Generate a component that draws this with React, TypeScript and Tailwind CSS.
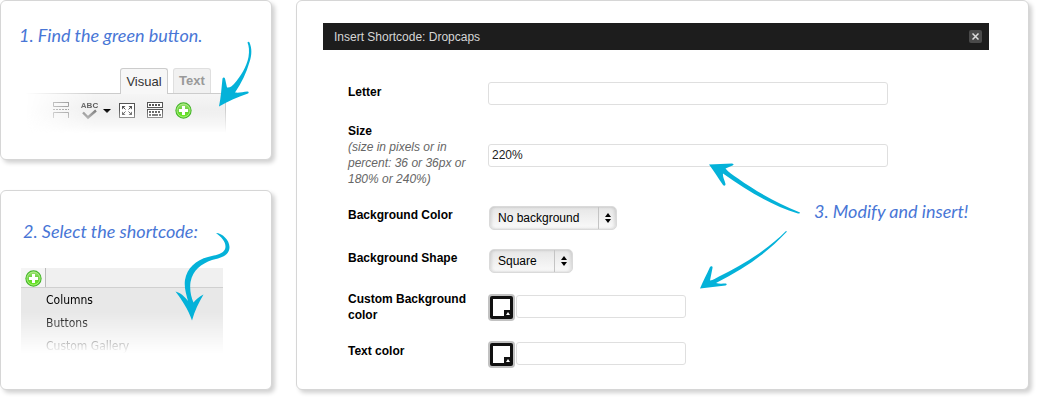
import type { ReactNode } from "react";

const MENU_ITEMS = ["Columns", "Buttons", "Custom Gallery"];

const CARD =
  "relative bg-white border border-[#d6d6d6] rounded-md shadow-[3px_3px_4px_rgba(0,0,0,0.18)]";
const NOTE =
  "font-['Lato','Open_Sans',sans-serif] italic text-lg leading-6 text-[#4876d6] whitespace-nowrap";
const FIELD =
  "block h-[23px] border border-[#dfdfdf] rounded-[3px] bg-white px-[3px] text-xs text-[#222] outline-none";

function PlusIcon({ id }: { id: string }) {
  return (
    <svg width="17" height="17" viewBox="0 0 17 17" aria-hidden="true">
      <defs>
        <linearGradient id={id} x1="0" y1="0" x2="0" y2="1">
          <stop offset="0" stopColor="#a4e47c" />
          <stop offset="0.5" stopColor="#62cf34" />
          <stop offset="1" stopColor="#6cf01c" />
        </linearGradient>
      </defs>
      <circle cx="8.5" cy="8.5" r="7.6" fill={`url(#${id})`} stroke="#45b52c" strokeWidth="1.1" />
      <circle cx="8.5" cy="8.5" r="6.5" fill="none" stroke="#b4f08c" strokeWidth="0.8" />
      <path d="M8.5 3.9v9.2M3.9 8.5h9.2" stroke="#fff" strokeWidth="3" />
    </svg>
  );
}

function MoreIcon() {
  return (
    <svg width="16" height="16" viewBox="0 0 16 16" fill="none" stroke="#666" aria-hidden="true">
      <path d="M0.5 0v4.5h15V0M0 0.5h16" />
      <path d="M0 7.5h16" strokeDasharray="2 1" />
      <path d="M0.5 16v-5.5h15V16" />
    </svg>
  );
}

function SpellIcon() {
  return (
    <svg width="18" height="18" viewBox="0 0 18 18" aria-hidden="true">
      <text x="8.5" y="6" textAnchor="middle" fontSize="8" fontWeight="bold" fontFamily="Liberation Sans" fill="#555">
        ABC
      </text>
      <path d="M2 10.5l5 5 8-7" fill="none" stroke="#777" strokeWidth="2.4" />
    </svg>
  );
}

function FullscreenIcon() {
  return (
    <svg width="16" height="15" viewBox="0 0 16 15" fill="none" aria-hidden="true">
      <rect x="0.5" y="0.5" width="15" height="14" fill="#fff" stroke="#555" />
      <path d="M3 3h3.500L3 6.500zM13 3v3.500L9.500 3zM13 12H9.500L13 8.500zM3 12V8.500L6.500 12z" fill="#555" />
      <path d="M4 4l2.500 2.500M12 4L9.500 6.500M12 11L9.500 8.500M4 11l2.500-2.500" stroke="#555" />
    </svg>
  );
}

function KeyboardIcon() {
  return (
    <svg width="16" height="16" viewBox="0 0 16 16" fill="none" stroke="#555" aria-hidden="true">
      <rect x="0.5" y="0.5" width="15" height="5" fill="#fff" />
      <rect x="0.5" y="7.5" width="15" height="8" fill="#fff" />
      <path d="M2 3h12" strokeWidth="2" strokeDasharray="2 1" />
      <path d="M2 10h12" strokeWidth="2" strokeDasharray="2 1" />
      <path d="M2 13h2M5 13h6M12 13h2" strokeWidth="2" />
    </svg>
  );
}

function Row({ label, id, hint, centered, children }: {
  label: string;
  id: string;
  hint?: string;
  centered?: boolean;
  children: ReactNode;
}) {
  return (
    <div className={`grid grid-cols-[140px_1fr] ${centered ? "items-center" : "items-start"}`}>
      <label htmlFor={id} className={`block pr-4 leading-4 ${centered ? "" : "pt-0.5"}`}>
        <span className="font-bold text-black">{label}</span>
        {hint && <em className="block text-[#666]">{hint}</em>}
      </label>
      {children}
    </div>
  );
}

function Dropdown({ id, options, width }: { id: string; options: string[]; width: string }) {
  return (
    <div className={`relative ml-px mt-px h-6 ${width}`}>
      <select
        id={id}
        className="h-6 w-full appearance-none rounded-[5px] border border-[#dadada] bg-linear-to-b from-[#e6e6e6] to-[#fafafa] pl-2 text-xs text-black shadow-[inset_2px_0_3px_rgba(0,0,0,0.1),inset_-2px_0_3px_rgba(0,0,0,0.1)] outline-none"
      >
        {options.map((option) => (
          <option key={option}>{option}</option>
        ))}
      </select>
      <span className="pointer-events-none absolute inset-y-px right-px flex w-[18px] items-center justify-center border-l border-[#c4c4c4]">
        <svg width="6" height="10" viewBox="0 0 6 10" aria-hidden="true">
          <path d="M3 0l3 4H0zM3 10l3-4H0z" fill="#000" />
        </svg>
      </span>
    </div>
  );
}

function ColorField({ id, label }: { id: string; label: string }) {
  return (
    <div className="flex items-start gap-px">
      <button type="button" aria-label={label} className="shrink-0">
        <svg width="27" height="27" viewBox="0 0 27 27">
          <rect width="27" height="27" rx="4" fill="#c2c2c2" />
          <rect x="2" y="2" width="23" height="23" rx="2" fill="#111" />
          <path d="M5 5h17v11h-6v6H5z" fill="#fff" />
          <path d="M20 18l2 3h-4z" fill="#fff" />
        </svg>
      </button>
      <input id={id} type="text" className={`${FIELD} mt-px w-[170px]`} />
    </div>
  );
}

export default function App() {
  return (
    <div className="flex items-stretch gap-6 bg-white pb-[11px] pr-2.5 font-['Liberation_Sans',Arial,sans-serif] text-xs">
      <div className="flex w-[272px] shrink-0 flex-col gap-[30px]">
        {/* Step 1 */}
        <section className={`${CARD} pt-[22px] pb-[26px]`}>
          <h2 className={`${NOTE} pl-[18px]`}>1. Find the green button.</h2>
          <div className="ml-6 mr-[45px] mt-[21px]">
            <div className="flex justify-end gap-[5px] pr-[15px] text-[13px]">
              <button
                type="button"
                className="relative z-10 -mb-px h-[26px] w-12 rounded-t-[3px] border border-b-0 border-[#ccc] bg-[#f7f7f7] text-[#333]"
              >
                Visual
              </button>
              <button
                type="button"
                className="h-[25px] w-[38px] rounded-t-[3px] border border-b-0 border-[#dfdfdf] bg-[#f1f1f1] font-bold text-[#999]"
              >
                Text
              </button>
            </div>
            <div className="mask-[linear-gradient(to_bottom,#000_40%,transparent)]">
              <div className="flex h-10 items-start border-t border-r border-[#ccc] bg-linear-to-b from-[#f5f5f5] to-[#e6e6e6] pl-7 pt-2 mask-[linear-gradient(to_right,transparent,#000_35%)]">
                <button type="button" aria-label="Insert More tag" className="mr-3">
                  <MoreIcon />
                </button>
                <button type="button" aria-label="Spellcheck" className="flex items-center gap-1">
                  <SpellIcon />
                  <svg width="8" height="4" viewBox="0 0 8 4" aria-hidden="true">
                    <path d="M0 0h8L4 4z" fill="#000" />
                  </svg>
                </button>
                <button type="button" aria-label="Fullscreen" className="ml-2 mr-3 pt-px">
                  <FullscreenIcon />
                </button>
                <button type="button" aria-label="Kitchen sink" className="mr-3">
                  <KeyboardIcon />
                </button>
              </div>
            </div>
          </div>
          {/* the green button stays at full strength over the faded toolbar */}
          <button type="button" aria-label="Add shortcode" className="absolute left-[174px] top-[101px]">
            <PlusIcon id="plus-toolbar" />
          </button>
          <svg
            className="pointer-events-none absolute left-[209px] top-[39px]"
            width="50"
            height="70"
            viewBox="210 40 50 70"
            aria-hidden="true"
          >
            <path
              d="M247.500 42.500C248 41.500 249 41.500 249.500 42.500C252 48 252 55 249.500 62C246.500 73 241.500 83 235 92.500C239 93 243 92 247.500 91.500C249 91.800 249 93 248 93.500C238 97 228 101 219 106.500C221 97 221.500 87 222.500 78.500C223 77 224.500 77 225 78.500L227 87.500C230 88 232 86 234 84C241 76 246.500 67 248.500 57C249.500 51 249 46 247.500 42.500Z"
              fill="#04b2d9"
            />
          </svg>
        </section>

        {/* Step 2 */}
        <section className={`${CARD} pt-7 pb-8`}>
          <h2 className={`${NOTE} pl-[22px]`}>2. Select the shortcode:</h2>
          <div className="ml-5 mr-12 mt-[25px] mask-[linear-gradient(to_bottom,#000_50%,transparent_96%)]">
            <div className="flex h-5 border-b border-[#d0d0d0] bg-[#f0f0f0]">
              <button
                type="button"
                aria-label="Shortcodes"
                className="flex w-[25px] items-center justify-center border-r border-[#bbb] bg-[#f5f5f5] pt-0.5"
              >
                <PlusIcon id="plus-menu" />
              </button>
            </div>
            <ul className="bg-[#e8e8e8] font-['DejaVu_Sans_Condensed','Noto_Sans',Tahoma,sans-serif] text-xs text-black">
              {MENU_ITEMS.map((item) => (
                <li key={item} className="h-[23px] pl-[25px] leading-[25px]">
                  {item}
                </li>
              ))}
            </ul>
          </div>
          <svg
            className="pointer-events-none absolute left-[169px] top-[39px]"
            width="65"
            height="95"
            viewBox="170 230 65 95"
            aria-hidden="true"
          >
            <path
              d="M216 233C222 233 229.500 240 229.500 247C229.500 256 220 258 212 260C201 264 193 270 190.500 282C189.500 290 191 297 193.500 302.500C196 299 199 297 203.500 294.500C199 302 194.500 311 192 320.500C188 309 182 300 175.500 291.500C181 293 185 297 188 301C186 294 184 287 185 280C187 268 196 260 208 257C216 255 225 254 225.500 247C225.500 241 221 237 216 233Z"
              fill="#04b2d9"
            />
          </svg>
        </section>
      </div>

      {/* Step 3 */}
      <section className={`${CARD} min-w-0 flex-1 pt-[22px] pb-[19px]`}>
        <header className="ml-[26px] mr-[39px] flex h-[27px] items-center justify-between bg-[#1d1d1d] pl-[11px] pr-[7px]">
          <h1 className="text-[#d6d6d6]">Insert Shortcode: Dropcaps</h1>
          <button
            type="button"
            aria-label="Close"
            className="flex size-[13px] items-center justify-center rounded-xs bg-[#4a4a4a]"
          >
            <svg width="7" height="7" viewBox="0 0 7 7" aria-hidden="true">
              <path d="M0.500 0.500l6 6M6.500 0.500l-6 6" stroke="#ddd" strokeWidth="1.500" />
            </svg>
          </button>
        </header>
        <form className="ml-[51px] mr-10 mt-8 flex flex-col gap-[18px]">
          <Row id="letter" label="Letter">
            <input id="letter" type="text" className={`${FIELD} w-full max-w-[400px]`} />
          </Row>
          <Row id="size" label="Size" hint="(size in pixels or in percent: 36 or 36px or 180% or 240%)" centered>
            <input id="size" type="text" defaultValue="220%" className={`${FIELD} w-full max-w-[400px]`} />
          </Row>
          <Row id="bg-color" label="Background Color">
            <Dropdown id="bg-color" options={["No background", "Custom"]} width="w-32" />
          </Row>
          <Row id="bg-shape" label="Background Shape">
            <Dropdown id="bg-shape" options={["Square", "Circle"]} width="w-[84px]" />
          </Row>
          <Row id="custom-bg" label="Custom Background color" centered>
            <ColorField id="custom-bg" label="Pick background color" />
          </Row>
          <Row id="text-color" label="Text color">
            <ColorField id="text-color" label="Pick text color" />
          </Row>
        </form>

        <svg
          className="pointer-events-none absolute left-[398px] top-[159px]"
          width="110"
          height="135"
          viewBox="695 160 110 135"
          aria-hidden="true"
        >
          <g fill="#04b2d9">
            <path d="M709 164.500L732 163.500C734 164 734 165 732.500 165.500L725.500 168.500C728 172 733 175 738 178.500C757 192 777 203 800 212.500C800 213.500 799 213.500 798 213.500C773 206 749 192 723 173.500C722.500 177 724.500 180 725.500 184C725.500 186 724 186 723 185C718 178 714 171 709 164.500Z" />
            <path d="M786 231C787 231 787 232 786 232.500C767 253 744 269 716 283C719 284 723 283.500 726 283.500C727 284 727 285 725.500 285.500L700 288.500C703 281 707 274 710 267C711 265.500 713 266 712.500 268L710 280.500C713 280.500 716 278 719 276.500C743 265 767 250 786 231Z" />
          </g>
        </svg>
        <p className={`${NOTE} absolute left-[517px] top-[198px]`}>3. Modify and insert!</p>
      </section>
    </div>
  );
}
